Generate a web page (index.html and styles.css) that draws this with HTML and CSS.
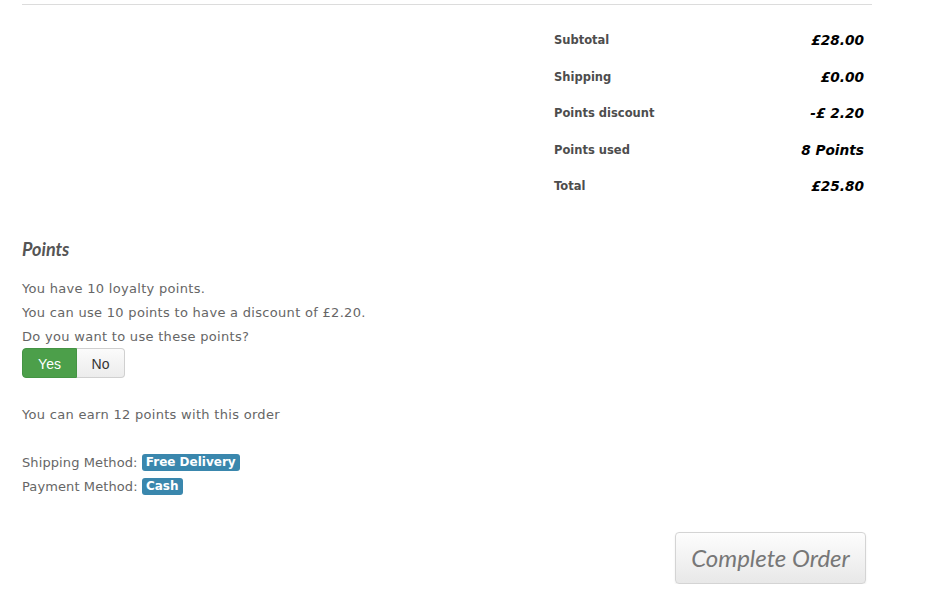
FILE: index.html
```html
<!DOCTYPE html>
<html>
<head>
<meta charset="utf-8">
<link rel="stylesheet" href="styles.css">
</head>
<body>
<div class="page">
  <hr class="rule">
  <div class="totals-wrap">
    <div class="totals">
      <div class="label">Subtotal</div><div class="value">£28.00</div>
      <div class="label">Shipping</div><div class="value">£0.00</div>
      <div class="label">Points discount</div><div class="value">-£ 2.20</div>
      <div class="label">Points used</div><div class="value">8 Points</div>
      <div class="label">Total</div><div class="value">£25.80</div>
    </div>
  </div>
  <h3 class="heading">Points</h3>
  <p class="line">You have 10 loyalty points.</p>
  <p class="line">You can use 10 points to have a discount of £2.20.</p>
  <p class="line">Do you want to use these points?</p>
  <div class="toggle">
    <span class="btn yes">Yes</span><span class="btn no">No</span>
  </div>
  <p class="line earn">You can earn 12 points with this order</p>
  <p class="line method">Shipping Method: <span class="badge">Free Delivery</span></p>
  <p class="line meth">Payment Method: <span class="badge">Cash</span></p>
  <div class="actions">
    <button class="complete">Complete Order</button>
  </div>
</div>
</body>
</html>
```

FILE: styles.css
```css
html, body {
  margin: 0;
  padding: 0;
  background: #fff;
}
body {
  font-family: "DejaVu Sans", Verdana, sans-serif;
  font-size: 13px;
  color: #666;
}
.page {
  width: 850px;
  padding: 4px 0 0 22px;
}
.rule {
  margin: 0;
  border: 0;
  border-top: 1px solid #dcdcdc;
}
.totals-wrap {
  display: flex;
  justify-content: flex-end;
  padding-top: 17px;
}
.totals {
  width: 326px;
  display: grid;
  grid-template-columns: 1fr auto;
  grid-auto-rows: 36.5px;
  align-items: center;
}
.label {
  padding-left: 8px;
  font-size: 11.5px;
  font-weight: bold;
  color: #4d4d4d;
}
.value {
  padding-right: 8px;
  font-size: 13.7px;
  font-weight: bold;
  font-style: italic;
  color: #000;
  text-align: right;
}
.heading {
  margin: 32px 0 0 0;
  font-family: Lato, sans-serif;
  font-weight: bold;
  font-style: italic;
  font-size: 18px;
  line-height: 24px;
  color: #555;
}
.line {
  margin: 0;
  font-size: 13px;
  line-height: 24px;
  letter-spacing: 0.3px;
}
.heading + .line {
  margin-top: 16px;
}
.toggle {
  display: flex;
  margin-top: -1px;
}
.btn {
  font-family: "Liberation Sans", Arial, sans-serif;
  font-size: 14px;
  height: 30px;
  line-height: 30px;
  box-sizing: border-box;
  padding: 0 12px;
}
.yes {
  width: 55px;
  text-align: center;
  background: #4c9f4a;
  color: #fff;
  border: 1px solid #449444;
  border-radius: 4px 0 0 4px;
}
.no {
  width: 48px;
  text-align: center;
  background: linear-gradient(#fbfbfb, #ececec);
  color: #333;
  border: 1px solid #d0d0d0;
  border-left: 0;
  border-radius: 0 4px 4px 0;
}
.earn {
  margin-top: 25px;
}
.method {
  margin-top: 24px;
}
.method, .meth {
  letter-spacing: 0.1px;
}
.badge {
  display: inline-block;
  background: #3a87ad;
  color: #fff;
  font-weight: bold;
  font-size: 12px;
  line-height: 17px;
  letter-spacing: 0;
  padding: 0 4px;
  border-radius: 3px;
  vertical-align: 1px;
}
.actions {
  display: flex;
  justify-content: flex-end;
  padding-right: 6px;
  margin-top: 33px;
}
.complete {
  width: 191px;
  height: 52px;
  font-family: Lato, sans-serif;
  font-style: italic;
  font-size: 24px;
  color: #777;
  background: linear-gradient(#fdfdfd, #e8e8e8);
  border: 1px solid #d4d4d4;
  border-radius: 4px;
  box-shadow: 0 1px 2px rgba(0,0,0,0.08);
}
```
